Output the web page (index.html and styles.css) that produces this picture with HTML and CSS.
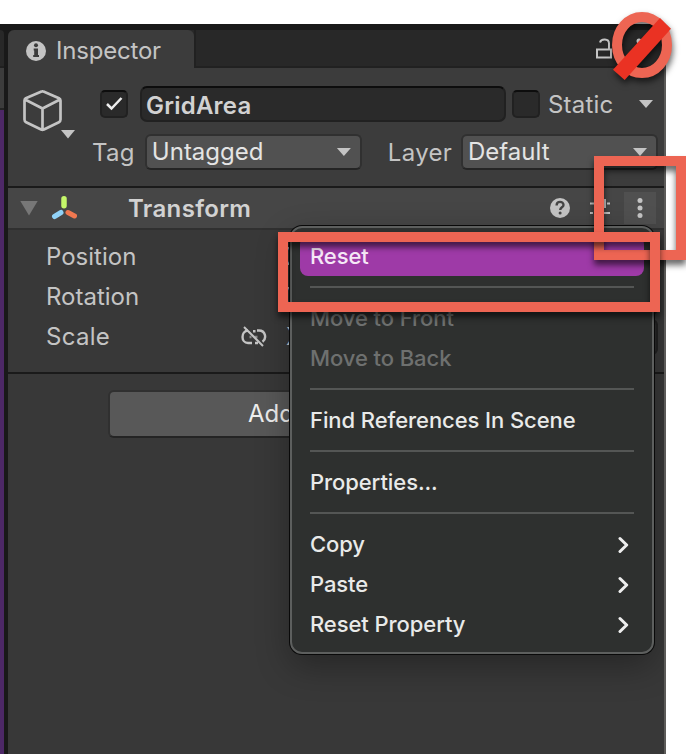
FILE: index.html
```html
<!DOCTYPE html>
<html lang="en">
<head>
<meta charset="utf-8">
<title>Inspector</title>
<link rel="stylesheet" href="styles.css">
</head>
<body>
<main class="window">
  <aside class="neighbor"><div class="neighbor-tab"></div><div class="neighbor-bar"></div><div class="neighbor-view"></div></aside>
  <section class="inspector">
    <nav class="tabs">
      <div class="tab">
        <svg class="info" width="20" height="20" viewBox="0 0 20 20"><circle cx="10" cy="10" r="10" fill="#c4c4c4"/><circle cx="10" cy="4.2" r="2" fill="#3c3c3c"/><path d="M7.7 7.6H12V14h1v2H7.200v-2h1V9.500h-.5z" fill="#3c3c3c"/></svg>
        <span class="t-inspector">Inspector</span>
      </div>
      <div class="tab-tools">
        <svg width="18" height="21" viewBox="0 0 18 21" fill="none" stroke="#c4c4c4" stroke-width="2"><path d="M1 11.500h14v8H1zM4 4.500C5 .5 13 .2 13 5.500v6"/></svg>
        <svg width="6" height="20" viewBox="0 0 6 20" fill="#c4c4c4"><circle cx="3" cy="3" r="2.500"/><circle cx="3" cy="10" r="2.500"/><circle cx="3" cy="17" r="2.500"/></svg>
      </div>
    </nav>
    <header class="object">
      <svg class="cube" width="54" height="50" viewBox="0 0 54 50"><path d="M18.500 1.600 2.800 8.200Q1.500 9 1.500 10.500v19q0 2 1.600 2.800l15 7.200q1.400.6 2.800 0l15-7.200q1.600-.8 1.600-2.800v-19Q37.500 9 36 8.200L20.500 1.600q-1-.5-2 0ZM2 9.500l17.500 9L37 9.500M19.500 18.500V39" fill="none" stroke="#c4c4c4" stroke-width="2.700" stroke-linejoin="round"/><path d="M38 40h14l-7 8.500z" fill="#c4c4c4"/></svg>
      <div class="object-fields">
        <div class="name-row">
          <span class="check"><svg width="20" height="16" viewBox="0 0 20 16"><path d="m3 8 4.500 4.500L17.500 2" fill="none" stroke="#eee" stroke-width="2.500"/></svg></span>
          <div class="name"><span class="t-name">GridArea</span></div>
          <span class="check"></span>
          <span class="label t-static">Static</span>
          <i class="arrow"></i>
        </div>
        <div class="tag-row">
          <span class="label t-tag">Tag</span>
          <div class="select tag"><span class="t-untagged">Untagged</span><i class="arrow"></i></div>
          <span class="label t-layer">Layer</span>
          <div class="select layer"><span class="t-default">Default</span><i class="arrow"></i></div>
        </div>
      </div>
    </header>
    <header class="component">
      <i class="fold"></i>
      <svg class="axes" width="26" height="24" viewBox="0 0 26 24" stroke-linecap="round" stroke-width="5"><path d="M13 2.800v7" stroke="#c5f76a" stroke-width="5.500"/><path d="m10 16.500-6.500 4" stroke="#90d2f8"/><path d="m17 16.500 6.500 3.500" stroke="#f07850"/></svg>
      <span class="t-transform">Transform</span>
      <div class="component-tools">
        <svg width="20" height="20" viewBox="0 0 20 20"><circle cx="10" cy="10" r="10" fill="#c4c4c4"/><path d="M6.600 7.400C6.600 2.600 13.500 3 13.500 6.900c0 2.500-3.300 2.300-3.300 5.100" fill="none" stroke="#464646" stroke-width="2.400"/><circle cx="10.100" cy="15.100" r="1.500" fill="#464646"/></svg>
        <svg class="preset" width="20" height="20" viewBox="0 0 20 20" stroke="#c4c4c4" stroke-width="2"><path d="M0 5.500h12m5 0h3M15 1v9M0 15h3m4 0h13M5 11v8"/></svg>
        <span class="more"><svg width="6" height="20" viewBox="0 0 6 20" fill="#c4c4c4"><circle cx="3" cy="2.600" r="2.500"/><circle cx="3" cy="10" r="2.500"/><circle cx="3" cy="17.400" r="2.500"/></svg></span>
      </div>
    </header>
    <div class="properties">
      <div class="property"><span class="label t-position">Position</span><span class="axis">X</span><i class="value"></i></div>
      <div class="property"><span class="label t-rotation">Rotation</span><span class="axis">X</span><i class="value"></i></div>
      <div class="property"><span class="label t-scale">Scale</span>
        <svg class="link" width="26" height="22" viewBox="0 0 26 22" fill="none" stroke="#c4c4c4" stroke-width="2.400"><path d="M7 4.500C-.3 5-.3 17 7 17h4M12 5.200h2.500M16 4.500h2c6.500 0 8 8 3.500 11.300M14 17h3"/><path d="M8.500 11h2M13.500 11h3" stroke="#8a8a8a"/><path d="m3 1 19 19" stroke-width="2"/></svg>
        <span class="axis">X</span><i class="value"></i></div>
    </div>
    <div class="footer"><div class="add"><span class="t-add">Add</span></div></div>
  </section>
</main>

<div class="menu">
  <div class="item selected"><span class="m-reset">Reset</span></div>
  <hr>
  <div class="item disabled"><span class="m-front">Move to Front</span></div>
  <div class="item disabled"><span class="m-back">Move to Back</span></div>
  <hr>
  <div class="item"><span class="m-find">Find References In Scene</span></div>
  <hr>
  <div class="item"><span class="m-props">Properties...</span></div>
  <hr>
  <div class="item"><span class="m-copy">Copy</span><svg class="chevron" width="11" height="18" viewBox="0 0 11 18"><path d="m2 2.500 6.700 6.500L2 15.500"/></svg></div>
  <div class="item"><span class="m-paste">Paste</span><svg class="chevron" width="11" height="18" viewBox="0 0 11 18"><path d="m2 2.500 6.700 6.500L2 15.500"/></svg></div>
  <div class="item"><span class="m-rprop">Reset Property</span><svg class="chevron" width="11" height="18" viewBox="0 0 11 18"><path d="m2 2.500 6.700 6.500L2 15.500"/></svg></div>
</div>

<div class="frame frame-more"></div>
<div class="frame frame-reset"></div>
<svg class="forbidden" width="70" height="80" viewBox="606 6 70 80"><ellipse cx="642" cy="45" rx="25" ry="28" fill="none" stroke="#ed6553" stroke-width="10"/><path d="m660 18 11 10.700L624.700 80 613 69.700z" fill="#ea3223"/></svg>
</body>
</html>
```

FILE: styles.css
```css
* { box-sizing: border-box; }
html, body { margin: 0; height: 754px; overflow: hidden; }
body { display: flow-root; position: relative; background: #fff; color: #c4c4c4; font: 24px/30px Inter, "Liberation Sans", sans-serif; }
span { white-space: nowrap; }
svg { display: block; flex: none; }

.window { display: flex; width: 666px; height: 730px; margin-top: 24px; padding-top: 6px; background: #191919; border-right: 2px solid #5c5b59; }
.neighbor { display: flex; flex-direction: column; width: 4px; margin-right: 4px; }
.neighbor-tab { height: 38px; background: #282828; border-bottom: 2px solid #202020; border-top-right-radius: 4px; }
.neighbor-bar { height: 42px; background: #3c3c3c; border-bottom: 2px solid #242424; }
.neighbor-view { flex: 1; background: #4d2867; }
.inspector { flex: 1; display: flex; flex-direction: column; min-width: 0; background: #383838; border-top-left-radius: 6px; overflow: hidden; }

.tabs { display: flex; height: 38px; background: #282828; }
.tab { display: flex; align-items: center; width: 186px; padding: 3px 0 0 18px; gap: 10px; background: #3c3c3c; border-radius: 6px 6px 0 0; }
.t-inspector { letter-spacing: -.2px; }
.tab-tools { flex: 1; display: flex; align-items: center; justify-content: flex-end; gap: 22px; padding-right: 22px; border-bottom: 2px solid #212121; border-left: 2px solid #212121; }

.object { display: flex; height: 118px; background: #3c3c3c; padding: 18px 6px 0 15px; }
.cube { margin-top: 4px; }
.object-fields { flex: 1; }
.name-row, .tag-row { display: flex; align-items: center; }
.name-row { height: 36px; padding-left: 23px; }
.tag-row { height: 36px; margin-top: 12px; padding-left: 15px; }
.check { flex: none; display: flex; align-items: center; justify-content: center; width: 28px; height: 28px; background: #2a2a2a; border: 2px solid #212121; border-top-color: #0d0d0d; border-radius: 5px; }
.name { flex: none; display: flex; align-items: center; width: 366px; height: 36px; margin: 0 6px 0 12px; padding: 3px 0 0 4px; background: #2a2a2a; border: 2px solid #212121; border-top-color: #0d0d0d; border-radius: 7px; color: #d2d2d2; font-weight: 600; }
.t-name { letter-spacing: .22px; }
.arrow { flex: none; width: 14px; height: 8px; background: #c4c4c4; clip-path: polygon(0 0, 100% 0, 50% 100%); }
.name-row .arrow { margin-left: auto; margin-right: 5px; }
.t-static { margin-left: 8px; padding-top: 2px; letter-spacing: .2px; }
.select { display: flex; align-items: center; justify-content: space-between; height: 36px; padding: 0 9px 0 5px; background: #515151; border: 2px solid #303030; border-bottom-color: #242424; border-radius: 6px; color: #e4e4e4; }
.tag { width: 217px; margin-left: 10px; }
.layer { width: 197px; margin-left: auto; }
.t-tag, .t-layer { padding-top: 2px; }
.t-tag { letter-spacing: .3px; }
.t-layer { margin-left: 26px; letter-spacing: .3px; }

.component { display: flex; align-items: center; height: 44px; padding-left: 12px; background: #464646; border-top: 2px solid #1a1a1a; border-bottom: 2px solid #303030; color: #d2d2d2; font-weight: 600; }
.fold { width: 18px; height: 15px; background: #777; clip-path: polygon(0 0, 100% 0, 50% 100%); }
.axes { margin: 0 0 0 13px; }
.t-transform { margin-left: 51px; padding-top: 2px; letter-spacing: .35px; }
.component-tools { display: flex; align-items: center; margin-left: auto; padding-right: 8px; }
.preset { margin: 0 14px 0 20px; }
.more { display: flex; align-items: center; justify-content: center; width: 32px; height: 32px; background: #505050; }

.properties { height: 142px; padding: 7px 6px 0 38px; }
.property { display: flex; align-items: center; height: 40px; }
.t-scale { letter-spacing: .3px; }
.link { margin-left: auto; margin-right: 19px; }
.axis { width: 20px; margin-left: auto; }
.link + .axis { margin-left: 0; }
.value { flex: none; width: 352px; height: 36px; background: #2a2a2a; border: 2px solid #212121; border-radius: 6px; }
.footer { flex: 1; border-top: 2px solid #1a1a1a; padding: 16px 0 0 100px; }
.add { display: flex; align-items: center; width: 460px; height: 48px; padding-left: 138px; background: #585858; border: 2px solid #303030; border-bottom-color: #242424; border-radius: 6px; color: #eee; }

.menu { position: absolute; left: 290px; top: 226px; width: 364px; height: 428px; padding: 8px; border: 2px solid #5d5f5e; border-radius: 12px; background: #2e302f; box-shadow: 0 0 0 1px #090909, 0 12px 34px rgba(0, 0, 0, .32); clip-path: inset(-40px -10px -60px -50px); color: #e9eae9; font-size: 22px; font-weight: 500; letter-spacing: -.08px; }
.item { display: flex; align-items: center; justify-content: space-between; height: 40px; padding: 0 15px 0 10px; }
.selected { background: #9e3aa7; border-radius: 8px; color: #f6e8f7; }
.disabled { color: #6e706f; }
hr { height: 2px; margin: 10px; border: 0; background: #545655; }
.chevron { fill: none; stroke: #eee; stroke-width: 3; stroke-linecap: round; stroke-linejoin: round; margin-top: 2px; }

.frame { position: absolute; border: 10px solid #ed6553; filter: drop-shadow(0 5px 3px rgba(0, 0, 0, .6)); }
.frame-more { left: 594px; top: 156px; width: 92px; height: 104px; }
.frame-reset { left: 278px; top: 232px; width: 382px; height: 80px; }
.forbidden { position: absolute; left: 606px; top: 6px; overflow: visible; filter: drop-shadow(1px 4px 3px rgba(0, 0, 0, .6)); }
```
